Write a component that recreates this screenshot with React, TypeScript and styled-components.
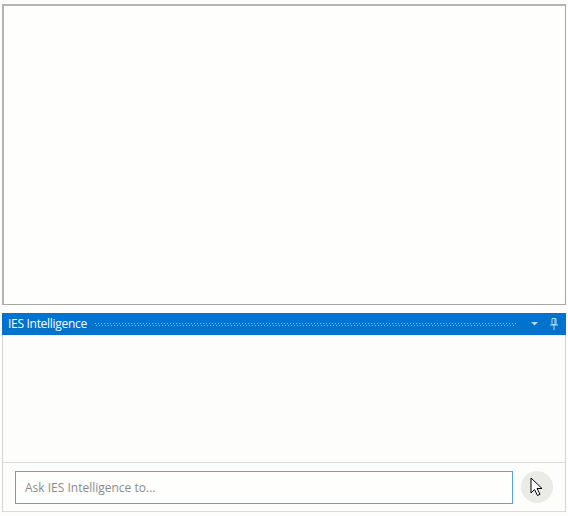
import React from "react";
import styled, { createGlobalStyle } from "styled-components";

const GlobalStyle = createGlobalStyle`
  html, body {
    margin: 0;
    padding: 0;
    background: #fdfdfb;
    font-family: "Open Sans", "Noto Sans", sans-serif;
  }
`;

const Layout = styled.div`
  width: 568px;
  height: 516px;
  box-sizing: border-box;
  padding: 4px 2px 0 2px;
  display: flex;
  flex-direction: column;
`;

const Viewport = styled.div`
  height: 301px;
  box-sizing: border-box;
  border: 1px solid #a8a8a8;
  border-top: 2px solid #b4b4b4;
  border-left: 2px solid #b4b4b4;
  background: #fefefd;
`;

const Dock = styled.section`
  margin-top: 8px;
  display: flex;
  flex-direction: column;
  border-left: 1px solid #d4d4d4;
  border-right: 1px solid #d4d4d4;
`;

const TitleBar = styled.header`
  height: 22px;
  background: #0073cf;
  color: #fff;
  display: flex;
  align-items: center;
  padding: 0 6px 0 6px;
  gap: 8px;
  font-size: 12px;
  margin: 0 -1px;
`;

const Title = styled.span`
  white-space: nowrap;
  line-height: 1;
  font-family: "Open Sans", "Noto Sans", sans-serif;
  font-size: 12px;
  letter-spacing: -0.3px;
`;

const dot = "rgba(170, 208, 240, 0.85)";

const Grip = styled.div`
  flex: 1;
  height: 3px;
  margin-right: 4px;
  background-image: repeating-linear-gradient(90deg, ${dot} 0 1px, transparent 1px 3px),
    repeating-linear-gradient(90deg, transparent 0 1px, ${dot} 1px 2px, transparent 2px 3px);
  background-size: 100% 1px, 100% 1px;
  background-position: 0 0, 0 2px;
  background-repeat: no-repeat;
`;

const BarButton = styled.button`
  border: 0;
  background: none;
  padding: 0;
  width: 12px;
  height: 16px;
  display: flex;
  align-items: center;
  justify-content: center;
  color: #b9d8f3;
`;

const History = styled.div`
  height: 127px;
  background: #fdfdfb;
  border-bottom: 1px solid #dcdcdc;
`;

const Composer = styled.div`
  height: 48px;
  display: flex;
  align-items: center;
  padding: 0 12px 0 12px;
  gap: 8px;
  border-bottom: 1px solid #dcdcdc;
`;

const Prompt = styled.input`
  flex: 1;
  height: 33px;
  box-sizing: border-box;
  border: 1px solid #5aa0e6;
  background: #fefefd;
  padding: 0 9px;
  font-family: "Open Sans", "Noto Sans", sans-serif;
  font-size: 12px;
  color: #333;
  outline: none;
  &::placeholder {
    color: #8a8a8a;
  }
`;

const SendButton = styled.button`
  width: 32px;
  height: 32px;
  border-radius: 50%;
  border: 0;
  background: #ebebe6;
  padding: 0;
  display: flex;
  align-items: center;
  justify-content: center;
`;

export default function App() {
  return (
    <>
      <GlobalStyle />
      <Layout>
        <Viewport />
        <Dock>
          <TitleBar>
            <Title>IES Intelligence</Title>
            <Grip />
            <BarButton aria-label="Options">
              <svg width="7" height="4" viewBox="0 0 7 4">
                <path d="M0 0h7L3.5 3.5z" fill="currentColor" />
              </svg>
            </BarButton>
            <BarButton aria-label="Pin">
              <svg width="8" height="12" viewBox="0 0 8 12">
                <path d="M2 0.5h4v6H2zM0 7h8M4 7v5M5 1v5" stroke="currentColor" strokeWidth="1" fill="none" />
              </svg>
            </BarButton>
          </TitleBar>
          <History />
          <Composer>
            <Prompt placeholder="Ask IES Intelligence to..." />
            <SendButton aria-label="Send">
              <svg width="14" height="20" viewBox="0 0 14 20">
                <path
                  d="M1 1v15l3.5-3.5 3 6 2.5-1.2-3-5.8H12z"
                  fill="#fff"
                  stroke="#000"
                  strokeWidth="1"
                  strokeLinejoin="miter"
                />
              </svg>
            </SendButton>
          </Composer>
        </Dock>
      </Layout>
    </>
  );
}
